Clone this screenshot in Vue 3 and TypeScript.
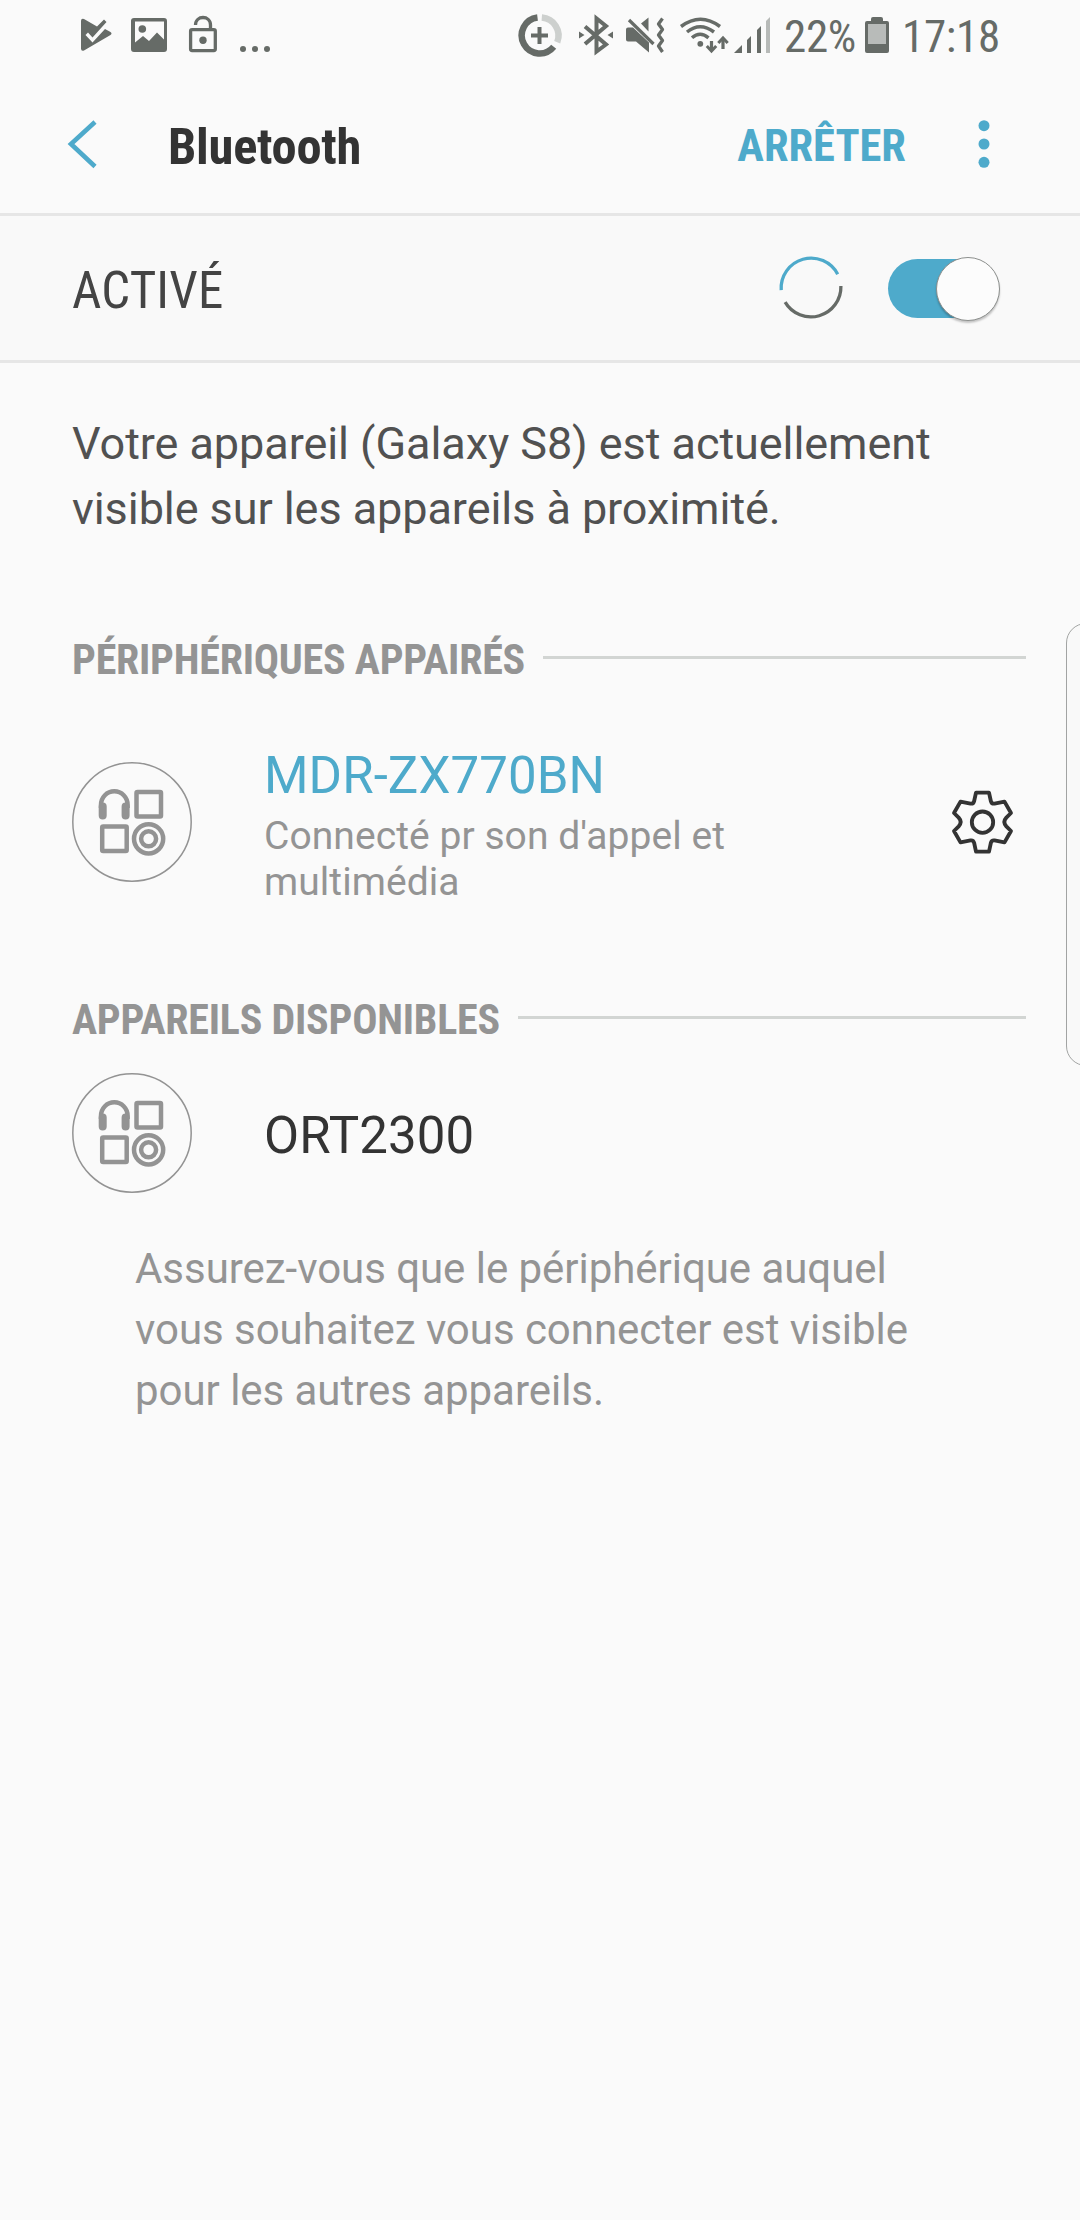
<script setup lang="ts">
interface Device {
  name: string
  status?: string
  connected: boolean
}
interface Section {
  title: string
  kind: string
  devices: Device[]
}

const sections: Section[] = [
  {
    title: 'PÉRIPHÉRIQUES APPAIRÉS',
    kind: 'paired',
    devices: [{ name: 'MDR-ZX770BN', status: "Connecté pr son d'appel et multimédia", connected: true }],
  },
  {
    title: 'APPAREILS DISPONIBLES',
    kind: 'available',
    devices: [{ name: 'ORT2300', connected: false }],
  },
]
</script>

<template>
  <div class="screen">
    <header class="status">
      <svg class="left-icons" width="200" height="72" viewBox="76 0 200 72">
        <g fill="#666b67">
          <path d="M81 21q0-3 3-2l13 7.500 7-7 2.500 2.500-14 15.500-4.500-5-2.500 2.500 7 7.500 12.500-13.500 5.500 3q2 1.500 0 3l-26.500 15.500q-3 1-3-2z" />
          <path fill-rule="evenodd" d="M134 18h30q3 0 3 3v28q0 3-3 3h-30q-3 0-3-3v-28q0-3 3-3zm1 3.500v21l8-6.500 6 5 8-8.500 7 7v-18z" />
          <circle cx="142.300" cy="29" r="3.800" />
          <circle cx="203" cy="40.300" r="3.700" />
          <circle cx="243" cy="49" r="3" /><circle cx="255" cy="49" r="3" /><circle cx="267" cy="49" r="3" />
        </g>
        <g fill="none" stroke="#666b67" stroke-width="3.300">
          <rect x="190.600" y="29.600" width="24.700" height="21" rx="1.500" />
          <path d="M195.500 25c0-10 15-10 15 0v4" />
        </g>
      </svg>
      <svg class="right-icons" width="256" height="72" viewBox="516 0 256 72">
        <g fill="none" stroke="#666b67">
          <path d="M537.500 17.600a18 18 0 1 0 16.200 29.200" stroke-width="6.500" />
          <path d="M541.800 17.600a18 18 0 0 1 15.400 24.600" stroke="#cdd0ce" stroke-width="6.500" />
          <path d="M531 35.500h17M539.500 27v17" stroke-width="4" />
          <path d="M585 26.500l21 18-9.500 7v-33l9.500 7.500-21 18" stroke-width="4" />
          <path d="M629 20l24.500 24" stroke-width="3.200" />
          <path d="M662.500 18.500l-4 5.500 4 5.500-4 5.500 4 5.500-4 5.500 4 6" stroke-width="3.300" stroke-linejoin="round" />
          <path d="M681 26.500q19.500-14.500 39 0M687 32q13-10.500 27 0M692 37.800q8-7 16.500 0" stroke-width="3.500" />
          <path d="M711.500 41v9M723 49v-10" stroke-width="3.200" />
          <path d="M706.800 46l4.700 5 4.700-5M718.300 43l4.700-5 4.700 5" stroke-width="3" />
        </g>
        <g fill="#666b67">
          <path d="M579 31.500l5.500 3.500-5.500 3.500zM613 31.500l-5.500 3.500 5.500 3.500z" />
          <path d="M626 29.500q0-2 2-2h5l16 15v10l-13-11h-8q-2 0-2-2zM641 23.500l7.500-6v14z" />
          <circle cx="700.300" cy="43.800" r="2.900" />
          <path d="M734 53l8-8v8zM747 53v-13l4-4v17zM757 53v-23l4-4v27z" />
          <path d="M766 53v-32l4-4v36z" fill="#b7bab8" />
        </g>
      </svg>
      <span class="cond percent">22%</span>
      <svg class="battery" width="24" height="72" viewBox="865 0 24 72">
        <path fill="#666b67" d="M871 21v-2q0-2 2-2h8q2 0 2 2v2h4q2 0 2 2v28q0 2-2 2h-20q-2 0-2-2v-28q0-2 2-2z" />
        <path fill="#b8bbb9" d="M868 24h18v20h-18z" />
      </svg>
      <span class="cond clock">17:18</span>
    </header>

    <nav class="bar">
      <svg class="back" width="34" height="52" viewBox="66 118 34 52">
        <path d="M95 122l-24 22 24 22.500" fill="none" stroke="#4eaacb" stroke-width="4.600" />
      </svg>
      <h1 class="cond">Bluetooth</h1>
      <span class="cond stop">ARRÊTER</span>
      <svg class="more" width="12" height="52" viewBox="978 118 12 52" fill="#4eaacb">
        <circle cx="984" cy="125.700" r="5.500" /><circle cx="984" cy="144" r="5.500" /><circle cx="984" cy="162.300" r="5.500" />
      </svg>
    </nav>

    <section class="master">
      <span class="cond on">ACTIVÉ</span>
      <svg class="spinner" width="68" height="68" viewBox="777.300 253.300 68 68" fill="none" stroke-width="3.300">
        <path d="M781.500 289.500a30 30 0 0 1 56.500-16" stroke="#4eaacb" />
        <path d="M841.200 285.300a30 30 0 0 1-55.800 16.200" stroke="#666b67" />
      </svg>
      <div class="toggle"><div class="thumb"></div></div>
    </section>

    <p class="intro">Votre appareil (Galaxy S8) est actuellement<br />visible sur les appareils à proximité.</p>

    <section v-for="s in sections" :key="s.kind" :class="s.kind">
      <div class="heading"><h2 class="cond">{{ s.title }}</h2><i></i></div>
      <div v-for="d in s.devices" :key="d.name" class="device">
        <svg class="badge" width="120" height="120" viewBox="0 0 120 120" fill="none" stroke="#939393">
          <circle cx="60" cy="60" r="59.200" stroke-width="1.500" />
          <path d="M29 46v-3.200a13.300 13.500 0 0 1 26.600 0v3.200" stroke-width="4.500" />
          <path d="M30.700 44.500v9M53.600 44.500v9" stroke-width="8" stroke-linecap="round" />
          <rect x="64.500" y="30" width="24.500" height="24.500" rx="1" stroke-width="4.500" />
          <rect x="30.200" y="64.500" width="24.500" height="24.500" rx="1" stroke-width="4.500" />
          <circle cx="76.600" cy="76.800" r="14.600" stroke-width="4.500" />
          <circle cx="76.600" cy="76.800" r="7.500" stroke-width="4.500" />
        </svg>
        <div class="info">
          <div class="name" :class="{ connected: d.connected }">{{ d.name }}</div>
          <div v-if="d.status" class="detail">{{ d.status }}</div>
        </div>
        <svg v-if="d.connected" class="gear" width="65" height="68" viewBox="150 565 195 204" fill="none" stroke="#333" stroke-width="11.500" stroke-linejoin="round">
          <path d="M228 579h39l5.500 25q2 9 11 8l30-6 19.500 34-14 14q-12 13 0 26l14 14-19.500 34-30-6q-9-1-11 8l-5.500 26h-39l-5.500-26q-2-9-11-8l-30 6-19.500-34 14-14q12-13 0-26l-14-14 19.500-34 30 6q9 1 11-8z" />
          <circle cx="247.500" cy="667.500" r="32" />
        </svg>
      </div>
    </section>

    <p class="hint">Assurez-vous que le périphérique auquel<br />vous souhaitez vous connecter est visible<br />pour les autres appareils.</p>

    <div class="edge-handle"></div>
  </div>
</template>

<style>
body {
  background: #fafafa;
}
</style>

<style scoped>
.screen {
  position: relative;
  width: 1080px;
  height: 2220px;
  overflow: hidden;
  background: #fafafa;
  font-family: Roboto, "Liberation Sans", sans-serif;
  color: #333;
}
.screen * {
  box-sizing: border-box;
}
svg {
  display: block;
  flex: none;
}
h1, h2, p {
  margin: 0;
}
.cond {
  font-family: "Roboto Condensed", Roboto, sans-serif;
  font-stretch: condensed;
  white-space: nowrap;
}
.status {
  display: flex;
  align-items: center;
  height: 72px;
  padding-left: 76px;
  font-size: 45px;
  line-height: 72px;
  letter-spacing: -0.3px;
  color: #666b67;
}
.right-icons {
  margin-left: 240px;
}
.percent {
  width: 80px;
  margin-left: 12px;
  padding-top: 1px;
}
.battery {
  margin-left: 1px;
}
.clock {
  margin-left: 13px;
  padding-top: 1px;
}
.bar {
  display: flex;
  align-items: center;
  height: 144px;
  padding: 0 90px 0 66px;
  border-bottom: 3px solid #e6e6e6;
}
.back,
.more {
  margin-top: 3px;
}
h1 {
  margin-left: 68px;
  padding-top: 8px;
  font-size: 50.500px;
  font-weight: 700;
  letter-spacing: -0.250px;
}
.stop {
  margin-left: auto;
  padding-top: 7px;
  font-size: 44.500px;
  font-weight: 700;
  color: #4eaacb;
}
.more {
  margin-left: 72px;
}
.master {
  display: flex;
  align-items: center;
  height: 147px;
  padding: 0 80px 0 72px;
  border-bottom: 3px solid #e6e6e6;
  background: #f9f9f9;
}
.on {
  padding-top: 5px;
  font-size: 51px;
  letter-spacing: 0.150px;
  color: #444;
}
.spinner {
  margin-left: auto;
}
.toggle {
  display: flex;
  justify-content: flex-end;
  align-items: center;
  width: 112px;
  height: 59px;
  margin-top: 1px;
  margin-left: 43px;
  border-radius: 30px;
  background: linear-gradient(to right, #4eaacb 82px, transparent 82px);
}
.thumb {
  flex: none;
  width: 64px;
  height: 64px;
  border: 1px solid #8c8f8d;
  border-radius: 50%;
  background: #fcfcfc;
  box-shadow: 0 2px 2px rgba(0, 0, 0, 0.22);
}
.intro {
  height: 248px;
  padding: 48px 0 0 72px;
  font-size: 45px;
  line-height: 65px;
  letter-spacing: -0.070px;
  color: #515151;
}
.heading {
  display: flex;
  align-items: center;
  gap: 18px;
  height: 93px;
  padding: 0 54px 0 72px;
}
h2 {
  padding-top: 4px;
  font-size: 42px;
  font-weight: 700;
  letter-spacing: -0.240px;
  color: #949494;
}
.heading i {
  flex: 1;
  height: 3px;
  background: #d2d5d3;
}
.device {
  display: flex;
  align-items: center;
  padding-left: 72px;
}
.paired {
  height: 360px;
}
.paired .device {
  height: 236px;
}
.available {
  height: 267px;
}
.available .device {
  height: 138px;
}
.available .info {
  padding-top: 5px;
}
.info {
  width: 560px;
  margin-left: 72px;
}
.name {
  font-size: 51px;
  line-height: 60px;
  letter-spacing: 0.080px;
  color: #333;
}
.name.connected {
  color: #4eaacb;
}
.detail {
  width: 500px;
  margin: 7px 0 -7px;
  font-size: 39px;
  line-height: 46px;
  letter-spacing: 0.060px;
  color: #949494;
}
.gear {
  margin-left: 126px;
}
.hint {
  padding-left: 135px;
  font-size: 42px;
  line-height: 61px;
  letter-spacing: -0.040px;
  color: #949494;
}
.edge-handle {
  position: absolute;
  top: 623px;
  left: 1066px;
  width: 60px;
  height: 443px;
  border: 1px solid #a2a4a3;
  border-radius: 20px;
  background: #f9f9f9;
}
</style>
